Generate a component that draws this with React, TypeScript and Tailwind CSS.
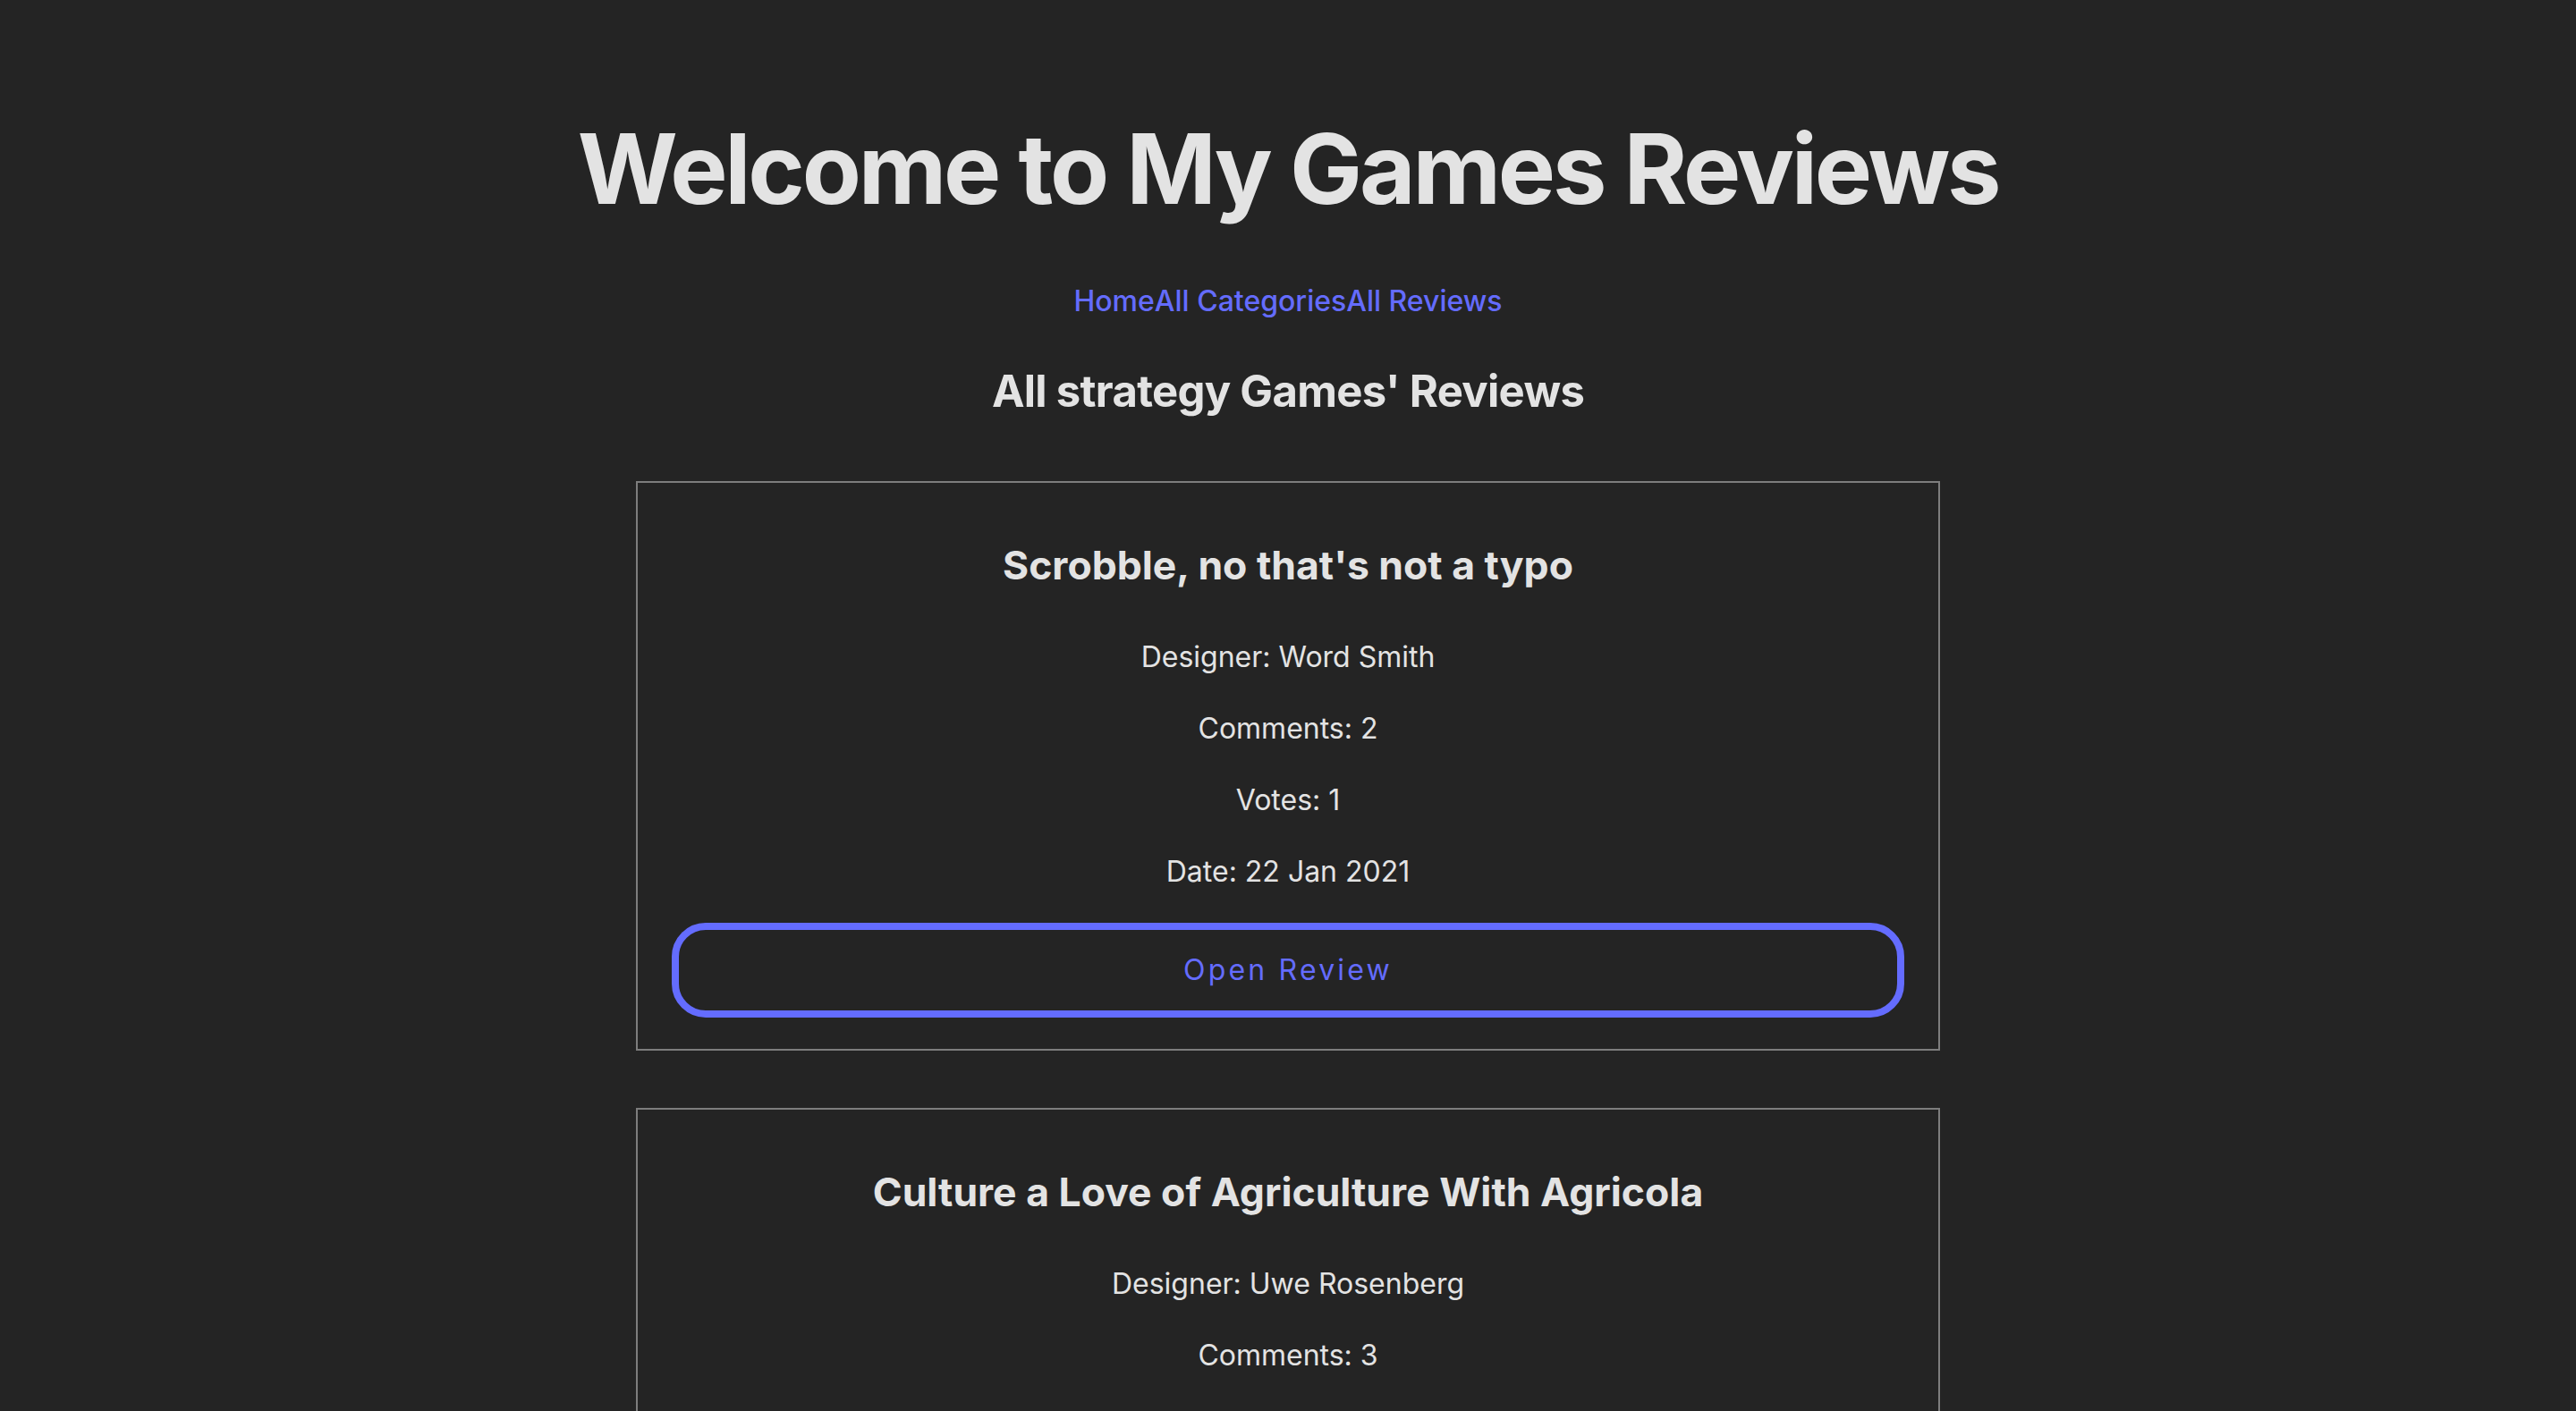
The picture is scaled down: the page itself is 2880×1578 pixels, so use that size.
import React from "react";

type Review = {
  title: string;
  designer: string;
  comments: number;
  votes: number;
  date: string;
};

const reviews: Review[] = [
  { title: "Scrobble, no that's not a typo", designer: "Word Smith", comments: 2, votes: 1, date: "22 Jan 2021" },
  { title: "Culture a Love of Agriculture With Agricola", designer: "Uwe Rosenberg", comments: 3, votes: 1, date: "18 Jan 2021" },
];

function Card({ r }: { r: Review }) {
  return (
    <div className="border-2 border-[#7d7d7d] w-[1458px] px-[38px] pt-[59px] pb-[35px] flex flex-col items-center">
      <h3 className="text-[44.5px] font-bold leading-[66px] m-0">{r.title}</h3>
      <div className="mt-[46px] flex flex-col items-center gap-[32px] text-[32px] leading-[48px] font-normal">
        <p>Designer: {r.designer}</p>
        <p>Comments: {r.comments}</p>
        <p>Votes: {r.votes}</p>
        <p>Date: {r.date}</p>
      </div>
      <button className="mt-[33px] w-full h-[106px] border-[8px] border-[#646cff] rounded-[38px] bg-transparent text-[#646cff] text-[32px] tracking-[3.2px] font-normal">
        Open Review
      </button>
    </div>
  );
}

export default function App() {
  return (
    <div
      className="min-h-screen bg-[#242424] text-[#e3e3e3] flex flex-col items-center pt-[126px] pb-[80px]"
      style={{ fontFamily: "Inter, 'Noto Sans', sans-serif" }}
    >
      <h1 className="text-[108px] font-bold leading-[126px] tracking-[-3.2px]">Welcome to My Games Reviews</h1>
      <nav className="mt-[61px] text-[32px] leading-[48px] font-medium text-[#646cff] flex">
        <a>Home</a>
        <a>All Categories</a>
        <a>All Reviews</a>
      </nav>
      <h2 className="mt-[40px] text-[49px] leading-[74px] font-bold tracking-[-0.7px]">All strategy Games' Reviews</h2>
      <div className="mt-[63px] flex flex-col gap-[64px]">
        {reviews.map((r) => (
          <Card key={r.title} r={r} />
        ))}
      </div>
    </div>
  );
}
